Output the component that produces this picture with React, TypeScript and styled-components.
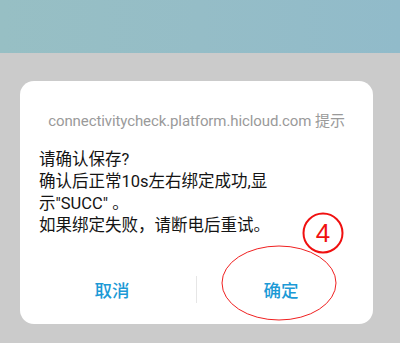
import React from 'react'
import styled, { createGlobalStyle } from 'styled-components'

const GlobalStyle = createGlobalStyle`
  html, body {
    margin: 0;
    padding: 0;
    background: #cccccc;
  }
  * {
    box-sizing: border-box;
  }
`

const Page = styled.div`
  width: 400px;
  height: 343px;
  overflow: hidden;
  font-family: Roboto, 'Noto Sans CJK SC', sans-serif;
  background: #cbcbcb;
`

const TopBand = styled.div`
  height: 53px;
  background: linear-gradient(90deg, #97bfc4 0%, #95bdc7 50%, #91bbca 100%);
`

const Backdrop = styled.div`
  padding: 28px 0 0 20px;
`

const Dialog = styled.div`
  position: relative;
  width: 353px;
  height: 243px;
  background: #ffffff;
  border-radius: 14px;
  display: flex;
  flex-direction: column;
  padding: 30px 0 11px;
`

const Title = styled.div`
  height: 20px;
  line-height: 20px;
  font-size: 15px;
  letter-spacing: -0.1px;
  color: #9a9a9a;
  text-align: center;
  white-space: nowrap;
`

const Body = styled.div`
  margin: 18px 0 0 19px;
  font-size: 16.5px;
  line-height: 22px;
  color: #141414;
`

const Line = styled.div`
  white-space: nowrap;
`

const Buttons = styled.div`
  margin-top: auto;
  height: 48px;
  padding: 0 8px;
  display: flex;
  align-items: center;
`

const Button = styled.div`
  flex: 1;
  text-align: center;
  font-size: 17.5px;
  font-weight: 500;
  color: #1c9ad6;
`

const Divider = styled.div`
  width: 1px;
  height: 27px;
  background: #e6e6e6;
`

const Annotation = styled.svg`
  position: absolute;
  left: 0;
  top: 0;
  width: 353px;
  height: 243px;
  pointer-events: none;
  overflow: visible;
`

export default function App() {
  return (
    <>
      <GlobalStyle />
      <Page>
        <TopBand />
        <Backdrop>
          <Dialog>
            <Title>connectivitycheck.platform.hicloud.com 提示</Title>
            <Body>
              <Line>请确认保存?</Line>
              <Line>确认后正常10s左右绑定成功,显</Line>
              <Line>示"SUCC" 。</Line>
              <Line>如果绑定失败，请断电后重试。</Line>
            </Body>
            <Buttons>
              <Button>取消</Button>
              <Divider />
              <Button>确定</Button>
            </Buttons>
            <Annotation viewBox="0 0 353 243">
              <circle cx="303" cy="152" r="19.5" fill="none" stroke="#f01010" strokeWidth="2" />
              <text
                x="303"
                y="161"
                textAnchor="middle"
                fontFamily="'Liberation Sans', sans-serif"
                fontSize="26"
                fill="#f01010"
              >
                4
              </text>
              <ellipse cx="259" cy="202" rx="57" ry="37" fill="none" stroke="#f02020" strokeWidth="1" />
            </Annotation>
          </Dialog>
        </Backdrop>
      </Page>
    </>
  )
}
